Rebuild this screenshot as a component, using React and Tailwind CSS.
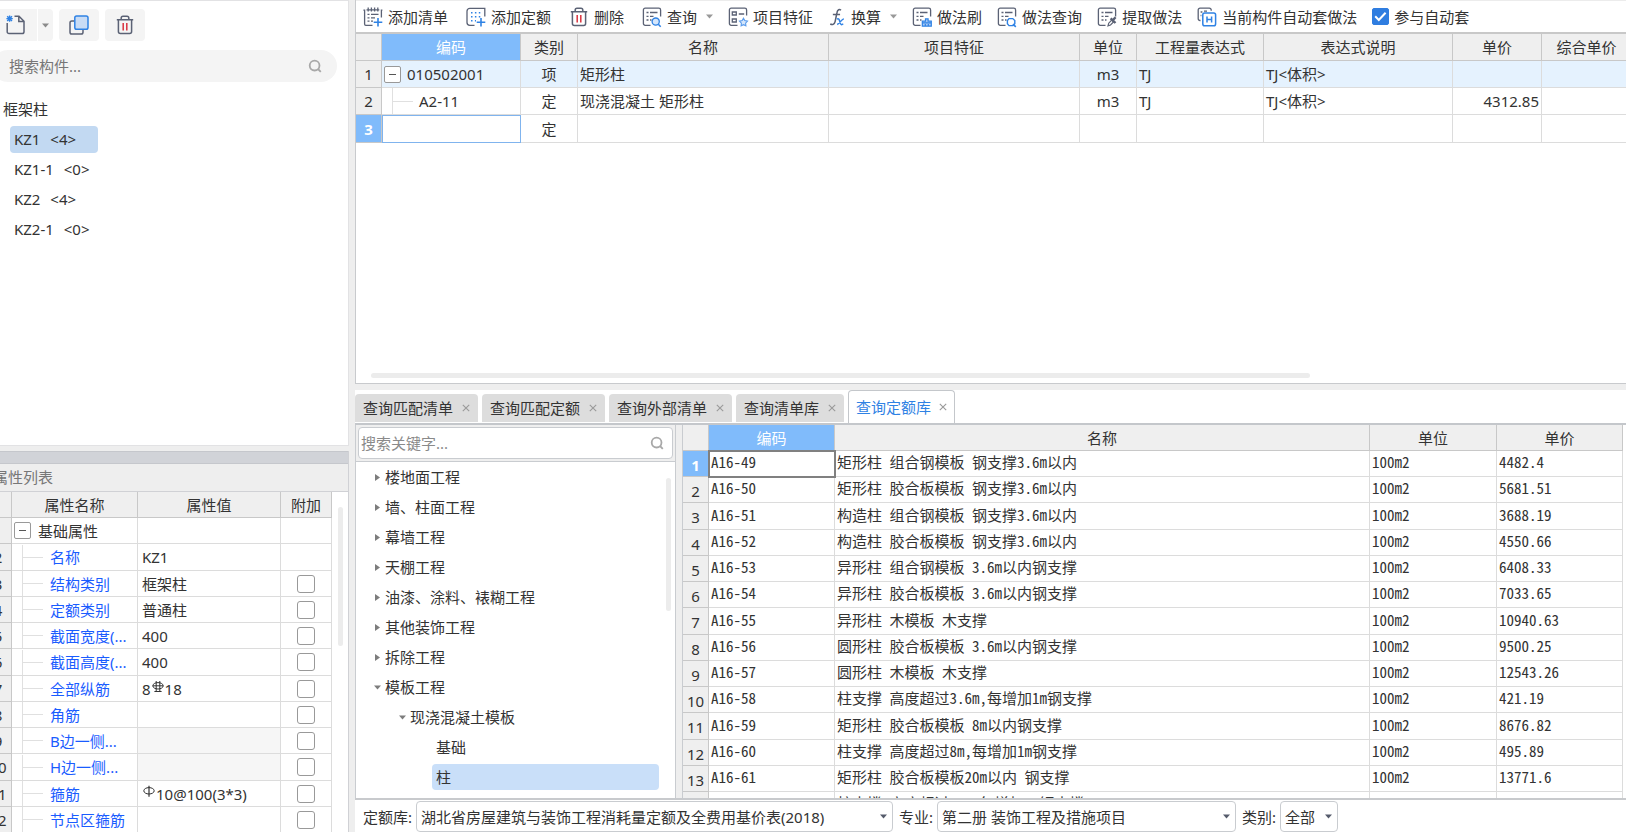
import React, { useState } from 'react';
import clsx from 'clsx';

const LINE = '#5b6275';
const BLUE = '#2f82e4';

const components = [
  { name: 'KZ1', count: 4 },
  { name: 'KZ1-1', count: 0 },
  { name: 'KZ2', count: 4 },
  { name: 'KZ2-1', count: 0 },
];

const properties = [
  { name: '名称', value: 'KZ1', extra: false },
  { name: '结构类别', value: '框架柱', extra: true },
  { name: '定额类别', value: '普通柱', extra: true },
  { name: '截面宽度(...', value: '400', extra: true },
  { name: '截面高度(...', value: '400', extra: true },
  { name: '全部纵筋', value: '18', prefix: '8', rebar: 'ribbed', extra: true },
  { name: '角筋', value: '', extra: true },
  { name: 'B边一侧...', value: '', disabled: true, extra: true },
  { name: 'H边一侧...', value: '', disabled: true, extra: true },
  { name: '箍筋', value: '10@100(3*3)', rebar: 'plain', extra: true },
  { name: '节点区箍筋', value: '', extra: true },
];

const tabs = ['查询匹配清单', '查询匹配定额', '查询外部清单', '查询清单库', '查询定额库'];

const chapters = [
  { name: '楼地面工程', level: 0 },
  { name: '墙、柱面工程', level: 0 },
  { name: '幕墙工程', level: 0 },
  { name: '天棚工程', level: 0 },
  { name: '油漆、涂料、裱糊工程', level: 0 },
  { name: '其他装饰工程', level: 0 },
  { name: '拆除工程', level: 0 },
  { name: '模板工程', level: 0, open: true },
  { name: '现浇混凝土模板', level: 1, open: true },
  { name: '基础', level: 2 },
  { name: '柱', level: 2 },
];

const quotas = [
  ['A16-49', '矩形柱 组合钢模板 钢支撑3.6m以内', '100m2', '4482.4'],
  ['A16-50', '矩形柱 胶合板模板 钢支撑3.6m以内', '100m2', '5681.51'],
  ['A16-51', '构造柱 组合钢模板 钢支撑3.6m以内', '100m2', '3688.19'],
  ['A16-52', '构造柱 胶合板模板 钢支撑3.6m以内', '100m2', '4550.66'],
  ['A16-53', '异形柱 组合钢模板 3.6m以内钢支撑', '100m2', '6408.33'],
  ['A16-54', '异形柱 胶合板模板 3.6m以内钢支撑', '100m2', '7033.65'],
  ['A16-55', '异形柱 木模板 木支撑', '100m2', '10940.63'],
  ['A16-56', '圆形柱 胶合板模板 3.6m以内钢支撑', '100m2', '9500.25'],
  ['A16-57', '圆形柱 木模板 木支撑', '100m2', '12543.26'],
  ['A16-58', '柱支撑 高度超过3.6m,每增加1m钢支撑', '100m2', '421.19'],
  ['A16-59', '矩形柱 胶合板模板 8m以内钢支撑', '100m2', '8676.82'],
  ['A16-60', '柱支撑 高度超过8m,每增加1m钢支撑', '100m2', '495.89'],
  ['A16-61', '矩形柱 胶合板模板20m以内 钢支撑', '100m2', '13771.6'],
  ['', '柱支撑 高度超过20m,每增加1m钢支撑', '', ''],
];

/* Icons */

const Icon = ({ className = 'w-5 h-5', children }) => (
  <svg viewBox="0 0 20 20" className={clsx('shrink-0 overflow-visible', className)} fill="none" stroke={LINE} strokeWidth="1.3" aria-hidden="true">
    {children}
  </svg>
);

// sheet outline with its lower right corner left open
const Sheet = () => <path d="M8.5 18.3H3.2a1.8 1.8 0 0 1-1.8-1.8V3a1.8 1.8 0 0 1 1.8-1.8h13.6A1.8 1.8 0 0 1 18.6 3v6.5" />;

const SheetLines = () => <path d="M4.5 5.5h2M8 5.5h7.5M4.5 9.3h2M8 9.3h3.5M4.5 13h2M8 13h1.5" />;

const AddListIcon = () => (
  <Icon>
    <path d="M9.5 18.3H2.8a1.2 1.2 0 0 1-1.2-1.2V3.2H0.4M18.4 10.5V3.2h1M3.5 2.8h12.8M5.2.6v4M8.4.6v4M11.6.6v4M14.8.6v4" />
    <path d="M4.5 7.4h2M8 7.4h7.5M4.5 10.8h2M8 10.8h4M4.5 14.2h2M8 14.2h2" />
    <path d="M15 11v8.5M10.7 15.2h8.6" stroke={BLUE} strokeWidth="1.6" />
  </Icon>
);

const AddQuotaIcon = () => (
  <Icon>
    <path d="M8.5 18.3H3.8M1 15.5V4.2a2.8 2.8 0 0 1 2.8-2.8H16M1 15.5a2.8 2.8 0 0 0 2.8 2.8M16 1.4h2.8v8.2" />
    <path d="M5 5.8h10M5 9.8h10M5 13.8h5" stroke={BLUE} strokeDasharray="1.5 2.4" strokeWidth="1.5" />
    <path d="M15 11v8.5M10.7 15.2h8.6" stroke={BLUE} strokeWidth="1.6" />
  </Icon>
);

const TrashIcon = ({ className }) => (
  <Icon className={className}>
    <path d="M1.8 4.8h16.4M6.2 4.5V3a1.8 1.8 0 0 1 1.8-1.8h4A1.8 1.8 0 0 1 13.8 3v1.5M3.4 5v11.5a2 2 0 0 0 2 2h9.2a2 2 0 0 0 2-2V5" strokeWidth="1.5" />
    <path d="M8.2 8v7.5M11.8 8v7.5" stroke="#d9333f" strokeWidth="1.5" />
  </Icon>
);

const QueryIcon = () => (
  <Icon>
    <Sheet />
    <SheetLines />
    <circle cx="13.7" cy="14.6" r="3.6" stroke={BLUE} fill="#d5e6fb" />
    <path d="M16.3 17.3l2.4 2.4" stroke={BLUE} strokeWidth="1.6" />
  </Icon>
);

const FeatureIcon = () => (
  <Icon>
    <path d="M9.5 18.3H3.2a1.8 1.8 0 0 1-1.8-1.8V3a1.8 1.8 0 0 1 1.8-1.8h13.6A1.8 1.8 0 0 1 18.6 3v5.5" />
    <path d="M4.3 5h4v3h-4zM4.3 12h4v3h-4zM10.8 7h5.4" />
    <path d="M15.5 11.2l1.3 2.4 2.7.5-1.9 2 .3 2.7-2.4-1.1-2.4 1.1.3-2.7-1.9-2 2.7-.5z" stroke="#5b9cec" fill="#d5e6fb" strokeWidth="1.1" />
  </Icon>
);

const FormulaIcon = () => (
  <Icon className="w-[18px] h-5">
    <path d="M14.4 2.6c-1.6-1.7-3.8-.9-4.4 2.4L7.9 15.2c-.7 3.2-3.2 3.8-5.4 2.6M5.4 7.2h8" strokeWidth="1.7" />
    <path d="M9.8 12.4c2-1.5 2.6.2 3.3 2.8s1.5 4.5 3.8 2.4M17.6 12.2c-2.4-.3-4.2 5-7.4 6.1" stroke={BLUE} strokeWidth="1.6" />
  </Icon>
);

const BrushIcon = () => (
  <Icon>
    <Sheet />
    <SheetLines />
    <path d="M10.3 19.2v-5h3.2v-2.4h2.6v2.4h3.2v5zM10.3 15.8h9M13.3 19v-2M16.3 19v-2" stroke={BLUE} fill="#a9cbf6" strokeWidth="1.2" />
  </Icon>
);

const MethodQueryIcon = () => (
  <Icon>
    <Sheet />
    <SheetLines />
    <path d="M12 11.6h3.8l2 2v3.2l-1.8 1.8H12l-1.6-1.8v-3.2z" stroke={BLUE} fill="#fff" strokeWidth="1.4" />
    <path d="M16 17.2l2.8 2.6" stroke={BLUE} strokeWidth="1.6" />
  </Icon>
);

const ExtractIcon = () => (
  <Icon>
    <Sheet />
    <SheetLines />
    <path d="M11 18.8l.7-2.6 3-3 1.8 1.8-3 3z" fill="#fff" strokeWidth="1.2" />
    <path d="M13.6 11.4l4.9 4.6M15.4 13.6l3.2-3.4" strokeWidth="2.4" />
  </Icon>
);

const AutoIcon = () => (
  <Icon>
    <path d="M3.5 13.5H3a1.8 1.8 0 0 1-1.8-1.8V3A1.8 1.8 0 0 1 3 1.2h9.4A1.8 1.8 0 0 1 14.2 3v.8" />
    <path d="M3.6 5h1.8M3.6 8.5h.8M7 4.2h3" />
    <rect x="5.8" y="6" width="12.8" height="12.8" rx="1.8" stroke={BLUE} strokeWidth="1.5" fill="#fff" />
    <path d="M10 9.5v6M14.6 9.5v6M10 12.5h4.6" stroke={BLUE} strokeWidth="1.5" />
  </Icon>
);

const NewIcon = () => (
  <Icon>
    <path d="M1.2 8v8.7a1.8 1.8 0 0 0 1.8 1.8h13.2a1.8 1.8 0 0 0 1.8-1.8V6.2L13 1.2H8.5M12.8 1.2v5.2H18" strokeWidth="1.5" />
    <path d="M3.6.4v6.4M.4 3.6h6.4M1.2 1.2l4.8 4.8M6 1.2L1.2 6" stroke={BLUE} strokeWidth="1.4" />
  </Icon>
);

const CopyIcon = () => (
  <Icon>
    <path d="M5.5 6H2.8A1.8 1.8 0 0 0 1 7.8v9.4A1.8 1.8 0 0 0 2.8 19h9.4a1.8 1.8 0 0 0 1.8-1.8V15" strokeWidth="1.5" />
    <rect x="5.8" y="1" width="13.2" height="13.2" rx="1.8" stroke={BLUE} fill="#c9dcf5" strokeWidth="1.5" />
  </Icon>
);

const SearchIcon = ({ className }) => (
  <svg viewBox="0 0 14 14" className={clsx('w-3.5 h-3.5 shrink-0', className)} fill="none" stroke="#a8a8a8" strokeWidth="1.8" aria-hidden="true">
    <circle cx="6.6" cy="6.6" r="4.9" />
    <path d="M10 10l2.8 2.8" />
  </svg>
);

const Caret = ({ className = 'text-[#8a8a8a]', right }) => (
  <svg viewBox="0 0 7 7" className={clsx('w-[7px] h-[7px] shrink-0', className)} fill="currentColor" aria-hidden="true">
    {right ? <path d="M1 0l5 3.5L1 7z" /> : <path d="M0 1.5h7L3.5 5.5z" />}
  </svg>
);

const RebarMark = ({ ribbed }) => (
  <svg viewBox="0 0 14 14" className="inline-block w-3.5 h-3.5 -mt-1.5" fill="none" stroke="#333" strokeWidth="1" aria-hidden="true">
    <ellipse cx="7" cy="5.8" rx="5.2" ry="3.2" />
    {ribbed ? <path d="M5.2 1v10.5M8.8 1v10.5M1.8 5.8h10.4M3.4 11.5h7.2" /> : <path d="M7 .8v11" strokeWidth="1.2" />}
  </svg>
);

const Toggle = () => (
  <button aria-label="折叠" className="relative z-10 w-[17px] h-[17px] shrink-0 border border-[#999] rounded-xs bg-white flex items-center justify-center">
    <span className="w-[7px] h-px bg-[#555]" />
  </button>
);

const ToolButton = ({ icon, label, menu }) => (
  <button className="flex items-center gap-[5px] whitespace-nowrap">
    {icon}
    <span>{label}</span>
    {menu && <Caret className="ml-1 text-[#999]" />}
  </button>
);

/* Left column */

const ComponentPanel = () => {
  const [active, setActive] = useState(0);

  return (
    <section className="h-[446px] shrink-0 bg-white border-t border-r border-b border-[#e2e2e4] pt-2">
      <div className="flex gap-1.5">
        <div className="flex gap-px">
          <button aria-label="新建" className="w-[37px] h-8 bg-[#f4f4f4] flex items-center pl-1.5"><NewIcon /></button>
          <button aria-label="新建选项" className="w-[15px] h-8 bg-[#f4f4f4] rounded-r flex items-center justify-center"><Caret /></button>
        </div>
        <button aria-label="复制" className="w-10 h-8 bg-[#f4f4f4] rounded flex items-center justify-center"><CopyIcon /></button>
        <button aria-label="删除" className="w-10 h-8 bg-[#f4f4f4] rounded flex items-center justify-center"><TrashIcon /></button>
      </div>
      <label className="mt-[9px] -ml-2 mr-[11px] h-8 rounded-full bg-[#f4f4f4] flex items-center pl-[17px] pr-[15px]">
        <input type="text" aria-label="搜索构件" placeholder="搜索构件..." className="flex-1 min-w-0 bg-transparent outline-none placeholder:text-[#777]" />
        <SearchIcon />
      </label>
      <div className="mt-3 pl-[3px] h-[30px] flex items-center">框架柱</div>
      <ul>
        {components.map((item, i) => (
          <li key={item.name} className="h-[30px] pl-2.5 flex items-center">
            <button
              onClick={() => setActive(i)}
              className={clsx('w-[88px] h-[27px] pl-1 rounded text-left whitespace-nowrap', i === active && 'bg-[#c2d9f2]')}
            >
              {item.name} <span className="ml-1.5">&lt;{item.count}&gt;</span>
            </button>
          </li>
        ))}
      </ul>
    </section>
  );
};

const PropertyPanel = () => (
  <section className="flex-1 min-h-0 flex flex-col border-r border-[#d0d1d5]">
    <div className="h-[13px] shrink-0 bg-[#d1d3d8] border-y border-[#c5c7cc]" />
    <h2 className="h-7 shrink-0 -ml-[7px] pb-0.5 flex items-center text-[#777] border-b border-[#d0d1d5]">属性列表</h2>
    <div className="flex-1 min-h-0 overflow-hidden bg-white flex items-start">
      <table className="-ml-[15px] w-[347px] shrink-0 table-fixed border-separate border-spacing-0 [&_td]:border-r [&_td]:border-b [&_td]:border-[#dcdcdc] [&_td]:p-0 [&_th]:border-r [&_th]:border-b [&_th]:border-[#c8c8c8] [&_th]:bg-[#efefef] [&_th]:font-normal [&_th]:p-0">
        <colgroup>
          <col className="w-[27px]" />
          <col className="w-[126px]" />
          <col className="w-[143px]" />
          <col className="w-[51px]" />
        </colgroup>
        <thead>
          <tr className="h-[26px]">
            <th />
            <th>属性名称</th>
            <th>属性值</th>
            <th>附加</th>
          </tr>
        </thead>
        <tbody>
          <tr className="h-[26px]">
            <th>1</th>
            <td>
              <div className="flex items-center gap-[7px] pl-0.5"><Toggle />基础属性</div>
            </td>
            <td />
            <td />
          </tr>
          {properties.map((row, i) => (
            <tr key={row.name} className={i % 4 === 0 ? 'h-[27px]' : 'h-[26px]'}>
              <th>{i + 2}</th>
              <td>
                <div className="h-[25px] flex items-center text-[#1a5cff] whitespace-nowrap">
                  <span className="ml-2.5 h-full border-l border-[#e0e0e0]" />
                  <span className="w-5 mr-[7px] border-t border-[#e0e0e0]" />
                  {row.name}
                </div>
              </td>
              <td className={clsx(row.disabled && 'bg-[#f6f6f6]')}>
                <div className="h-5 pl-1 whitespace-nowrap">
                  {row.prefix}
                  {row.rebar && <RebarMark ribbed={row.rebar === 'ribbed'} />}
                  {row.value}
                </div>
              </td>
              <td>
                {row.extra && (
                  <input type="checkbox" aria-label={`附加 ${row.name}`} className="appearance-none block mx-auto w-[18px] h-[18px] border border-[#999] rounded-[3px] checked:bg-[#2f82e4]" />
                )}
              </td>
            </tr>
          ))}
        </tbody>
      </table>
      <div className="mt-[15px] ml-1.5 w-[5px] h-[139px] rounded-full bg-[#ececec]" />
    </div>
  </section>
);

/* Right column */

const Toolbar = () => (
  <div className="h-8 shrink-0 flex items-center pl-[7px] gap-[15px] border-t border-[#ececec]">
    <div className="flex items-center gap-[18px]">
      <ToolButton icon={<AddListIcon />} label="添加清单" />
      <ToolButton icon={<AddQuotaIcon />} label="添加定额" />
      <ToolButton icon={<TrashIcon />} label="删除" />
      <ToolButton icon={<QueryIcon />} label="查询" menu />
    </div>
    <ToolButton icon={<FeatureIcon />} label="项目特征" />
    <ToolButton icon={<FormulaIcon />} label="换算" menu />
    <ToolButton icon={<BrushIcon />} label="做法刷" />
    <ToolButton icon={<MethodQueryIcon />} label="做法查询" />
    <ToolButton icon={<ExtractIcon />} label="提取做法" />
    <ToolButton icon={<AutoIcon />} label="当前构件自动套做法" />
    <label className="flex items-center gap-[5px] whitespace-nowrap">
      <span className="relative w-[17px] h-[17px]">
        <input type="checkbox" defaultChecked className="peer appearance-none block w-[17px] h-[17px] rounded-xs border border-[#999] checked:border-[#2f7de0] checked:bg-[#2f7de0]" />
        <svg viewBox="0 0 17 17" className="absolute inset-0 hidden peer-checked:block pointer-events-none" fill="none" stroke="#fff" strokeWidth="2">
          <path d="M3.2 8.2l3.6 3.8 6.8-7.2" />
        </svg>
      </span>
      参与自动套
    </label>
  </div>
);

const MethodTable = () => (
  <table className="w-[1276px] table-fixed border-separate border-spacing-0 [&_td]:border-r [&_td]:border-b [&_td]:border-[#dcdcdc] [&_td]:px-0.5 [&_td]:py-0 [&_th]:border-r [&_th]:border-b [&_th]:border-[#c8c8c8] [&_th]:font-normal [&_th]:p-0 whitespace-nowrap">
    <colgroup>
      <col className="w-[26px]" />
      <col className="w-[139px]" />
      <col className="w-[57px]" />
      <col className="w-[251px]" />
      <col className="w-[251px]" />
      <col className="w-[57px]" />
      <col className="w-[127px]" />
      <col className="w-[189px]" />
      <col className="w-[89px]" />
      <col className="w-[90px]" />
    </colgroup>
    <thead>
      <tr className="h-[27px] bg-[#efefef]">
        <th />
        <th className="bg-[#80bbfb] text-white">编码</th>
        <th>类别</th>
        <th>名称</th>
        <th>项目特征</th>
        <th>单位</th>
        <th>工程量表达式</th>
        <th>表达式说明</th>
        <th>单价</th>
        <th>综合单价</th>
      </tr>
    </thead>
    <tbody>
      <tr className="h-[27px] bg-[#e5f2fe]">
        <th className="bg-[#efefef]">1</th>
        <td><div className="flex items-center gap-1.5"><Toggle />010502001</div></td>
        <td className="text-center">项</td>
        <td>矩形柱</td>
        <td />
        <td className="text-center">m3</td>
        <td>TJ</td>
        <td>TJ&lt;体积&gt;</td>
        <td />
        <td />
      </tr>
      <tr className="h-[27px]">
        <th className="bg-[#efefef]">2</th>
        <td>
          <div className="h-[26px] flex items-center">
            <span className="ml-2 h-full border-l border-[#e0e0e0]" />
            <span className="w-5 mr-1.5 border-t border-[#e0e0e0]" />
            A2-11
          </div>
        </td>
        <td className="text-center">定</td>
        <td>现浇混凝土 矩形柱</td>
        <td />
        <td className="text-center">m3</td>
        <td>TJ</td>
        <td>TJ&lt;体积&gt;</td>
        <td className="text-right">4312.85</td>
        <td />
      </tr>
      <tr className="h-7">
        <th className="bg-[#80bbfb] text-white"><span className="font-bold">3</span></th>
        <td className="outline outline-[#80b4ee] -outline-offset-1" />
        <td className="text-center">定</td>
        <td />
        <td />
        <td />
        <td />
        <td />
        <td />
        <td />
      </tr>
    </tbody>
  </table>
);

const ChapterTree = () => {
  const [selected, setSelected] = useState('柱');

  return (
    <div className="w-[321px] shrink-0 flex flex-col bg-white border-x border-[#c9ccd0]">
      <div className="shrink-0 bg-[#efefef] p-0.5 border-b border-[#c9ccd0]">
        <label className="h-8 bg-white border border-[#c9ccd0] rounded flex items-center pl-0.5 pr-2">
          <input type="text" aria-label="搜索关键字" placeholder="搜索关键字..." className="flex-1 min-w-0 bg-transparent outline-none placeholder:text-[#8a8a8a]" />
          <SearchIcon />
        </label>
      </div>
      <div className="flex-1 min-h-0 overflow-hidden flex">
        <ul className="flex-1 pl-[18px]">
          {chapters.map((item) => (
            <li key={item.name} className={clsx('h-[30px] flex items-center', item.level === 1 && 'pl-[25px]', item.level === 2 && 'pl-[58px]')}>
              <button
                onClick={() => setSelected(item.name)}
                className={clsx('h-[26px] flex items-center gap-1 rounded whitespace-nowrap', item.level === 2 && 'w-[227px] pl-1', item.name === selected && 'bg-[#c9dff9]')}
              >
                {item.level < 2 && <Caret right={!item.open} className="text-[#7d7d7d]" />}
                {item.name}
              </button>
            </li>
          ))}
        </ul>
        <div className="mt-4 mr-1 w-[5px] h-[133px] rounded-full bg-[#ececec]" />
      </div>
    </div>
  );
};

const QuotaTable = () => (
  <div className="flex-1 min-w-0 overflow-hidden bg-white border-l border-[#c9ccd0] pr-[3px]">
    <table className="w-full table-fixed border-separate border-spacing-0 [&_td]:border-r [&_td]:border-b [&_td]:border-[#dcdcdc] [&_td]:px-0.5 [&_td]:pt-0 [&_td]:pb-[3px] [&_th]:border-r [&_th]:border-b [&_th]:border-[#c8c8c8] [&_th]:font-normal [&_th]:p-0 whitespace-nowrap">
      <colgroup>
        <col className="w-[26px]" />
        <col className="w-[126px]" />
        <col />
        <col className="w-[127px]" />
        <col className="w-[126px]" />
      </colgroup>
      <thead>
        <tr className="h-[26px] bg-[#efefef]">
          <th />
          <th className="bg-[#80bbfb] text-white">编码</th>
          <th>名称</th>
          <th>单位</th>
          <th>单价</th>
        </tr>
      </thead>
      <tbody className="font-['Noto_Sans_Mono_CJK_SC','Liberation_Mono','Noto_Sans_CJK_SC',monospace]">
        {quotas.map(([code, name, unit, price], i) => (
          <tr key={name} className={i % 4 === 2 ? 'h-[27px]' : 'h-[26px]'}>
            <th className={clsx("font-['Noto_Sans','Noto_Sans_CJK_SC',sans-serif]", i === 0 ? 'bg-[#80bbfb] text-white' : 'bg-[#efefef]')}>
              <span className={clsx('block pt-0.5', i === 0 && 'font-bold')}>{i + 1}</span>
            </th>
            <td className={clsx(i === 0 && 'outline-2 outline-[#808080] -outline-offset-1')}>{code}</td>
            <td>{name}</td>
            <td>{unit}</td>
            <td>{price}</td>
          </tr>
        ))}
      </tbody>
    </table>
  </div>
);

const FilterSelect = ({ id, label, value, className }) => (
  <div className="flex items-center gap-1">
    <label htmlFor={id} className="whitespace-nowrap">{label}</label>
    <div className={clsx('relative', className)}>
      <select id={id} className="appearance-none w-full h-[31px] pl-1 bg-white border border-[#c9ccd0] rounded outline-none">
        <option>{value}</option>
      </select>
      <Caret className="absolute right-1.5 top-3 pointer-events-none text-[#555b6b]" />
    </div>
  </div>
);

const QueryPanel = () => {
  const [tab, setTab] = useState(4);

  return (
    <section className="flex-1 min-h-0 flex flex-col">
      <div role="tablist" className="h-[35px] shrink-0 bg-white border-b-2 border-[#c4c7cb] flex items-end gap-1">
        {tabs.map((name, i) => (
          <div
            key={name}
            className={clsx(
              'flex items-center whitespace-nowrap rounded-t',
              i === tab ? 'h-[33px] px-[7px] gap-2 bg-white border border-b-0 border-[#c4c7cb] text-[#2f82e4]' : 'h-7 px-2 gap-[9px] mb-px bg-[#dddddd]'
            )}
          >
            <button role="tab" aria-selected={i === tab} onClick={() => setTab(i)}>{name}</button>
            <button aria-label={`关闭 ${name}`}>
              <svg viewBox="0 0 8 8" className="w-2 h-2" fill="none" stroke="#9a9a9a" strokeWidth="1.1"><path d="M.8.8l6.4 6.4M7.2.8L.8 7.2" /></svg>
            </button>
          </div>
        ))}
      </div>
      <div className="flex-1 min-h-0 flex gap-1.5">
        <ChapterTree />
        <QuotaTable />
      </div>
      <div className="h-[34px] shrink-0 bg-white border-t-2 border-[#c8cacd] flex items-center gap-1.5 pl-2 pt-px">
        <FilterSelect id="library" label="定额库:" value="湖北省房屋建筑与装饰工程消耗量定额及全费用基价表(2018)" className="w-[477px]" />
        <FilterSelect id="major" label="专业:" value="第二册 装饰工程及措施项目" className="w-[299px]" />
        <FilterSelect id="kind" label="类别:" value="全部" className="w-[58px]" />
      </div>
    </section>
  );
};

const App = () => (
  <main className="h-screen overflow-hidden flex gap-1.5 bg-[#eeeeee] text-[#333] text-[15px] leading-5 font-['Noto_Sans','Noto_Sans_CJK_SC',sans-serif]">
    <div className="w-[349px] shrink-0 flex flex-col gap-[5px]">
      <ComponentPanel />
      <PropertyPanel />
    </div>
    <div className="flex-1 min-w-0 flex flex-col gap-1.5">
      <section className="h-96 shrink-0 flex flex-col bg-white border-l border-b border-[#c8cacd]">
        <Toolbar />
        <div className="flex-1 min-h-0 overflow-hidden border-t-2 border-[#c8c8c8]">
          <MethodTable />
        </div>
        <div className="ml-[15px] mb-[5px] mr-[316px] h-[5px] rounded-full bg-[#ececec]" />
      </section>
      <QueryPanel />
    </div>
  </main>
);

export default App;
